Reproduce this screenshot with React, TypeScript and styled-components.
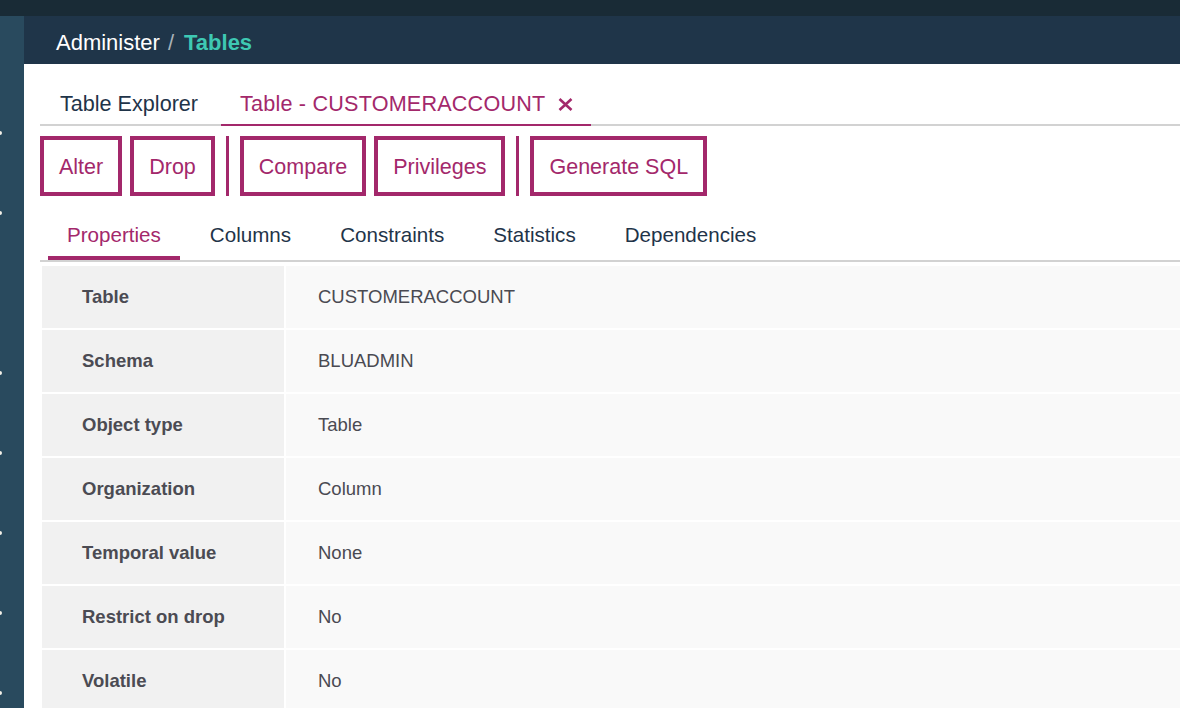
import styled, { createGlobalStyle } from "styled-components";

const colors = {
  topBar: "#192b36",
  sidebar: "#294a5e",
  header: "#1f3549",
  teal: "#3ec8b3",
  magenta: "#a3286b",
  navy: "#1f3449",
  line: "#d2d2d2",
  labelBg: "#f1f1f1",
  valueBg: "#f9f9f9",
  text: "#4a4a52",
};

const GlobalStyle = createGlobalStyle`
  html, body {
    margin: 0;
    padding: 0;
    height: 708px;
    overflow: hidden;
    background: #fff;
    font-family: "Liberation Sans", Arial, sans-serif;
  }
  * { box-sizing: border-box; }
`;

const sidebarItems = [true, true, false, true, true, true, true, true];

const properties: [string, string][] = [
  ["Table", "CUSTOMERACCOUNT"],
  ["Schema", "BLUADMIN"],
  ["Object type", "Table"],
  ["Organization", "Column"],
  ["Temporal value", "None"],
  ["Restrict on drop", "No"],
  ["Volatile", "No"],
];

const subTabs = ["Properties", "Columns", "Constraints", "Statistics", "Dependencies"];

const CloseIcon = () => (
  <svg width="15" height="13" viewBox="0 0 15 13">
    <path d="M1.5 1L13.5 12M13.5 1L1.5 12" stroke="currentColor" strokeWidth="2.6" />
  </svg>
);

const App = () => {
  return (
    <Page>
      <GlobalStyle />
      <TopBar />
      <Body>
        <Sidebar>
          {sidebarItems.map((show, i) => (
            <SideItem key={i}>{show && <SideDot />}</SideItem>
          ))}
        </Sidebar>
        <Main>
          <Header>
            <Crumb>Administer</Crumb>
            <Slash>/</Slash>
            <CrumbActive>Tables</CrumbActive>
          </Header>
          <Content>
            <TabBar>
              <Tab>Table Explorer</Tab>
              <Tab active>
                Table - CUSTOMERACCOUNT
                <CloseIcon />
              </Tab>
            </TabBar>
            <Toolbar>
              <ActionButton>Alter</ActionButton>
              <ActionButton>Drop</ActionButton>
              <Separator />
              <ActionButton>Compare</ActionButton>
              <ActionButton>Privileges</ActionButton>
              <Separator />
              <ActionButton>Generate SQL</ActionButton>
            </Toolbar>
            <SubTabBar>
              {subTabs.map((name, i) => (
                <SubTab key={name} active={i === 0}>
                  {name}
                </SubTab>
              ))}
            </SubTabBar>
            <PropTable>
              <tbody>
                {properties.map(([label, value]) => (
                  <tr key={label}>
                    <LabelCell>{label}</LabelCell>
                    <ValueCell>{value}</ValueCell>
                  </tr>
                ))}
              </tbody>
            </PropTable>
          </Content>
        </Main>
      </Body>
    </Page>
  );
};

const Page = styled.div`
  display: flex;
  flex-direction: column;
  width: 1180px;
  height: 708px;
  overflow: hidden;
`;

const TopBar = styled.div`
  height: 16px;
  flex-shrink: 0;
  background: ${colors.topBar};
`;

const Body = styled.div`
  display: flex;
  flex: 1;
  min-height: 0;
`;

const Sidebar = styled.nav`
  width: 24px;
  flex-shrink: 0;
  display: flex;
  flex-direction: column;
  padding-top: 77px;
  background: ${colors.sidebar};
`;

const SideItem = styled.div`
  height: 80px;
  flex-shrink: 0;
  display: flex;
  align-items: center;
`;

const SideDot = styled.span`
  width: 4px;
  height: 4px;
  margin-left: -2px;
  border-radius: 50%;
  background: #f3f0e8;
`;

const Main = styled.main`
  flex: 1;
  min-width: 0;
  display: flex;
  flex-direction: column;
  overflow: hidden;
`;

const Header = styled.header`
  height: 48px;
  flex-shrink: 0;
  display: flex;
  align-items: center;
  padding: 5px 0 0 32px;
  background: ${colors.header};
  font-size: 22px;
`;

const Crumb = styled.span`
  color: #fff;
`;

const Slash = styled.span`
  margin: 0 10px 0 8px;
  color: #a9b2b9;
`;

const CrumbActive = styled.span`
  color: ${colors.teal};
  font-weight: bold;
`;

const Content = styled.section`
  flex: 1;
  padding-left: 16px;
  overflow: hidden;
`;

const TabBar = styled.div`
  height: 62px;
  display: flex;
  align-items: flex-end;
  border-bottom: 2px solid ${colors.line};
`;

const Tab = styled.div<{ active?: boolean }>`
  height: 42px;
  margin-bottom: -2px;
  display: flex;
  align-items: center;
  gap: 13px;
  padding: ${({ active }) => (active ? "0 18px 0 19px" : "0 23px 0 20px")};
  border-bottom: 2px solid ${({ active }) => (active ? colors.magenta : "transparent")};
  color: ${({ active }) => (active ? colors.magenta : colors.navy)};
  font-size: 21.6px;
  letter-spacing: ${({ active }) => (active ? "0.2px" : "0")};
`;

const Toolbar = styled.div`
  display: flex;
  gap: 8px;
  margin-top: 10px;
  height: 60px;
`;

const ActionButton = styled.button`
  height: 60px;
  padding: 2px 15px 0;
  border: 4px solid ${colors.magenta};
  background: #fff;
  color: ${colors.magenta};
  font-family: inherit;
  font-size: 21.5px;
`;

const Separator = styled.span`
  width: 3px;
  height: 60px;
  margin: 0 3px;
  background: ${colors.magenta};
`;

const SubTabBar = styled.div`
  display: flex;
  gap: 11px;
  margin-top: 18px;
  padding-left: 8px;
  border-bottom: 2px solid ${colors.line};
`;

const SubTab = styled.div<{ active?: boolean }>`
  height: 46px;
  padding: 9px 19px 0;
  line-height: 24px;
  font-size: 20.6px;
  color: ${({ active }) => (active ? colors.magenta : colors.navy)};
  border-bottom: 4px solid ${({ active }) => (active ? colors.magenta : "transparent")};
`;

const PropTable = styled.table`
  width: calc(100% + 20px);
  margin-top: 2px;
  border-collapse: separate;
  border-spacing: 2px;
  font-size: 18.5px;
  color: ${colors.text};
`;

const LabelCell = styled.td`
  width: 242px;
  height: 62px;
  padding: 0 0 0 40px;
  background: ${colors.labelBg};
  font-weight: bold;
  color: #4b4b53;
`;

const ValueCell = styled.td`
  height: 62px;
  padding: 0 0 0 32px;
  background: ${colors.valueBg};
`;

export default App;
